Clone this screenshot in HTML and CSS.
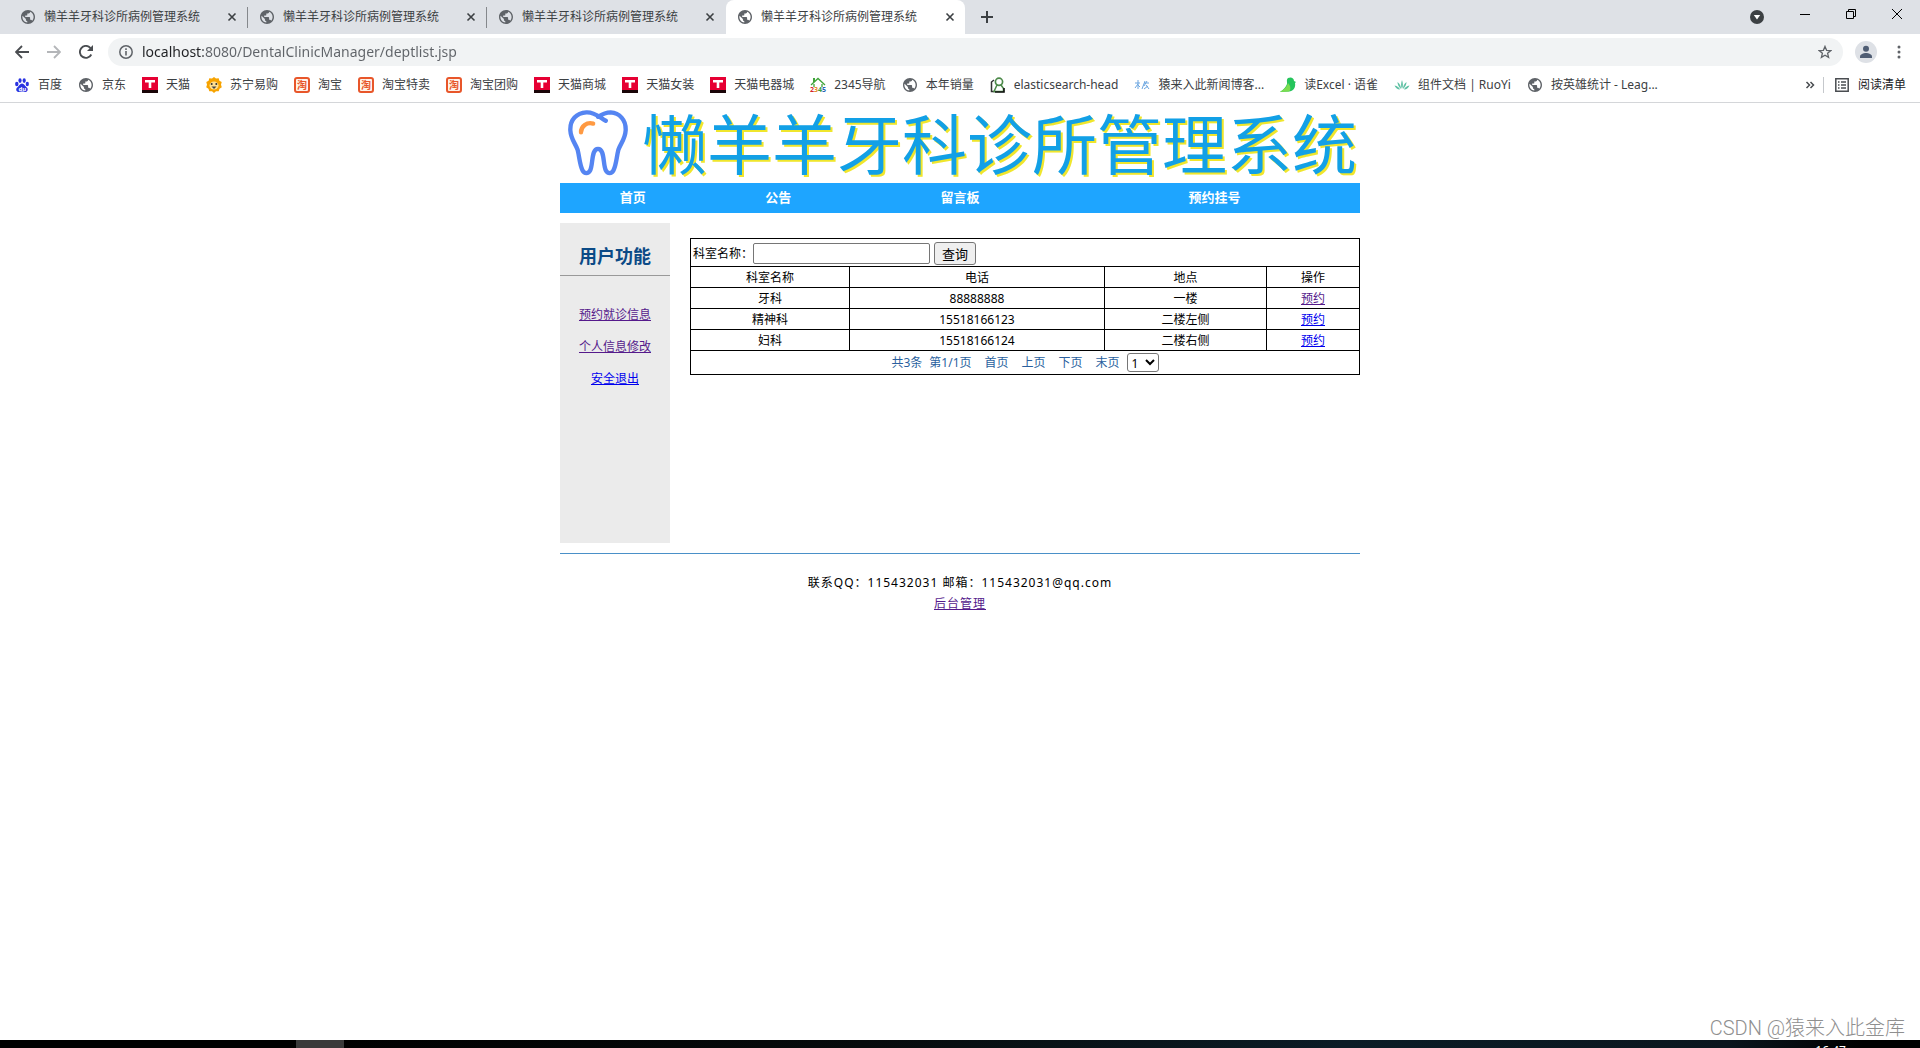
FILE: index.html
```html
<!DOCTYPE html>
<html lang="zh-CN">
<head>
<meta charset="utf-8">
<title>懒羊羊牙科诊所病例管理系统</title>
<link rel="stylesheet" href="styles.css">
</head>
<body>
<svg class="defs" aria-hidden="true">
  <symbol id="globe" viewBox="2 2 20 20"><path fill="#5f6368" d="M12 2C6.480 2 2 6.480 2 12s4.480 10 10 10 10-4.480 10-10S17.520 2 12 2zm-1 17.930c-3.950-.490-7-3.850-7-7.930 0-.620.080-1.210.210-1.790L9 15v1c0 1.100.9 2 2 2v1.930zm6.900-2.540c-.260-.810-1-1.390-1.900-1.390h-1v-3c0-.550-.450-1-1-1H8v-2h2c.550 0 1-.450 1-1V7h2c1.100 0 2-.9 2-2v-.410c2.930 1.190 5 4.060 5 7.410 0 2.080-.8 3.970-2.100 5.390z"/></symbol>
  <symbol id="close" viewBox="0 0 10 10"><path d="M1.500 1.500l7 7M8.500 1.500l-7 7" stroke="#3c4043" stroke-width="1.600" fill="none"/></symbol>
  <symbol id="tmall" viewBox="0 0 16 16"><path fill="#e60033" d="M0 0h16v13H0z"/><path fill="#1a0508" d="M0 13h16v3H0z"/><path fill="#fff" d="M3 3h10v2.500H9.300V11H6.700V5.500H3z"/></symbol>
</svg>

<header class="browser">
  <nav class="tabs" aria-label="标签页">
    <div class="tab"><svg class="i14"><use href="#globe"/></svg><span>懒羊羊牙科诊所病例管理系统</span><button aria-label="关闭"><svg class="i10"><use href="#close"/></svg></button></div>
    <div class="tab"><svg class="i14"><use href="#globe"/></svg><span>懒羊羊牙科诊所病例管理系统</span><button aria-label="关闭"><svg class="i10"><use href="#close"/></svg></button></div>
    <div class="tab last"><svg class="i14"><use href="#globe"/></svg><span>懒羊羊牙科诊所病例管理系统</span><button aria-label="关闭"><svg class="i10"><use href="#close"/></svg></button></div>
    <div class="tab active"><svg class="i14"><use href="#globe"/></svg><span>懒羊羊牙科诊所病例管理系统</span><button aria-label="关闭"><svg class="i10"><use href="#close"/></svg></button></div>
    <button class="new-tab" aria-label="新标签页"><svg class="i12" viewBox="0 0 12 12"><path d="M6 0v12M0 6h12" stroke="#3c4043" stroke-width="2"/></svg></button>
    <div class="window-buttons">
      <button aria-label="搜索标签页"><svg class="i14" viewBox="0 0 14 14"><circle cx="7" cy="7" r="7" fill="#3c4043"/><path fill="#fff" d="M3.800 5h6.400L7 9.500z"/></svg></button>
      <button class="raised" aria-label="最小化"><svg class="i10" viewBox="0 0 10 10"><path d="M0 5.500h10" stroke="#000"/></svg></button>
      <button class="raised" aria-label="还原"><svg class="i10" viewBox="0 0 10 10"><path d="M.5 2.500h7v7h-7zM2.500 2.500v-2h7v7h-2" fill="none" stroke="#000"/></svg></button>
      <button class="raised" aria-label="关闭窗口"><svg class="i10" viewBox="0 0 10 10"><path d="M0 0l10 10M10 0L0 10" stroke="#000"/></svg></button>
    </div>
  </nav>

  <div class="toolbar">
    <button aria-label="后退"><svg class="i14" viewBox="0 0 14 14"><path d="M14 7H1.500M7 1L1 7l6 6" fill="none" stroke="#4a4d51" stroke-width="1.800"/></svg></button>
    <button aria-label="前进"><svg class="i14" viewBox="0 0 14 14"><path d="M0 7h12.500M7 1l6 6-6 6" fill="none" stroke="#b4b6b9" stroke-width="1.800"/></svg></button>
    <button aria-label="刷新"><svg class="i14" viewBox="0 0 14 14"><path d="M12.300 9.500A6 6 0 1 1 11.300 2.800L12.500 4" fill="none" stroke="#4a4d51" stroke-width="1.900"/><path fill="#4a4d51" d="M14 0v6H8z"/></svg></button>
    <div class="omnibox">
      <svg class="i14" viewBox="0 0 14 14"><circle cx="7" cy="7" r="6.200" fill="none" stroke="#5f6368" stroke-width="1.500"/><path d="M6.200 6h1.600v4.500H6.200zM6.200 3.300h1.600v1.600H6.200z" fill="#5f6368"/></svg>
      <input type="text" aria-label="地址" value="localhost:8080/DentalClinicManager/deptlist.jsp">
      <button aria-label="收藏"><svg class="i14" viewBox="0 0 14 14"><path d="M7 1.400l1.600 3.900 4.200.3-3.200 2.700 1 4.100L7 10.200l-3.600 2.200 1-4.100L1.200 5.600l4.200-.3z" fill="none" stroke="#5f6368" stroke-width="1.300"/></svg></button>
    </div>
    <button class="avatar" aria-label="个人资料"><svg class="i22" viewBox="0 0 22 22"><circle cx="11" cy="11" r="11" fill="#dee1e6"/><circle cx="11" cy="7.800" r="3" fill="#4f5d73"/><path d="M5 17v-1.500c0-2 3.500-3.500 6-3.500s6 1.500 6 3.500V17z" fill="#4f5d73"/></svg></button>
    <button aria-label="菜单"><svg class="i14" viewBox="0 0 14 14" fill="#5f6368"><circle cx="7" cy="2" r="1.500"/><circle cx="7" cy="7" r="1.500"/><circle cx="7" cy="12" r="1.500"/></svg></button>
  </div>

  <nav class="bookmarks" aria-label="书签">
    <a href="#"><svg viewBox="0 0 16 16" fill="#2932e1"><ellipse cx="2.800" cy="7" rx="1.700" ry="2.200"/><ellipse cx="6" cy="3.600" rx="1.600" ry="2.300"/><ellipse cx="10.200" cy="3.600" rx="1.600" ry="2.300"/><ellipse cx="13.300" cy="7" rx="1.600" ry="2.200"/><path d="M8 6.600c2.200 0 3 2.400 4.800 3.900 1.700 1.500 1 4.300-1.300 4.400-1.300.1-2-.3-3.500-.3s-2.300.4-3.600.3c-2.300-.2-2.900-3-1.200-4.400C5 9 5.800 6.600 8 6.600z"/><text x="4.500" y="13.500" font-size="6" font-weight="700" fill="#fff">du</text></svg>百度</a>
    <a href="#"><svg class="small"><use href="#globe"/></svg>京东</a>
    <a href="#"><svg><use href="#tmall"/></svg>天猫</a>
    <a href="#"><svg viewBox="0 0 16 16"><path fill="#f7a300" d="M8 0l2 1.500 2.700-.2.700 2.500L15.700 5 15 7.700l.8 2.500-2.300 1.500-.8 2.600-2.700-.1L8 16l-2-1.800-2.700.1-.8-2.600L.2 10.200 1 7.700.3 5l2.300-1.200.7-2.500L6 1.500z"/><ellipse cx="8" cy="8.500" rx="4.500" ry="4" fill="#ffdf8f"/><circle cx="5.700" cy="7" r="1" fill="#333"/><circle cx="10.300" cy="7" r="1" fill="#333"/><path d="M5.500 9.500h5L8 12z" fill="#444"/></svg>苏宁易购</a>
    <a href="#"><span class="taobao">淘</span>淘宝</a>
    <a href="#"><span class="taobao">淘</span>淘宝特卖</a>
    <a href="#"><span class="taobao">淘</span>淘宝团购</a>
    <a href="#"><svg><use href="#tmall"/></svg>天猫商城</a>
    <a href="#"><svg><use href="#tmall"/></svg>天猫女装</a>
    <a href="#"><svg><use href="#tmall"/></svg>天猫电器城</a>
    <a href="#"><svg viewBox="0 0 16 16"><path d="M1 8l7-6.500L15 8M4 7v3M12 7v3" fill="none" stroke="#3fa43a" stroke-width="1.300"/><path d="M3 1h2v4H3z" fill="#3fa43a"/><g font-size="7" font-weight="700"><text x="0" y="15" fill="#d4262c">2</text><text x="4" y="15" fill="#e08a1c">3</text><text x="8" y="15" fill="#3b9c38">4</text><text x="12" y="15" fill="#2466b4">5</text></g></svg>2345导航</a>
    <a href="#"><svg class="small"><use href="#globe"/></svg>本年销量</a>
    <a href="#"><svg viewBox="0 0 16 16" fill="none"><path d="M4 3L1.500 5v9.500H5" stroke="#333" stroke-width="1.500"/><circle cx="9" cy="4.800" r="3.600" stroke="#4d8a4a" stroke-width="1.700"/><path d="M7 8l-3 6.500h9.500v-3L11 8" stroke="#4d8a4a" stroke-width="1.500"/><path d="M5 15h9v-4" stroke="#111" stroke-width="1.600"/></svg>elasticsearch-head</a>
    <a href="#"><svg viewBox="0 0 16 16" fill="none" stroke="#6aa5e0"><path d="M1 6h5M4 3v9M4 7l-3 4M4 8l2 2M8 12l3-8M10 6h5M13 4l-3 5M10 12l4-3M12 8l3 4"/></svg>猿来入此新闻博客...</a>
    <a href="#"><svg viewBox="0 0 16 16"><path d="M8 1c3-1.500 6 0 6 3l2 1-1 1c1 5-2 8-6 8.500L0 15C4 12 6 10 7 7c.5-2-1-4 1-6z" fill="#25c45c"/><path d="M0 15c4-3 7-5 8-9 3 3 3 7 1 8.500z" fill="#7ddc50"/></svg>读Excel · 语雀</a>
    <a href="#"><svg viewBox="0 0 16 16" fill="#5fc1a4"><path d="M8 12C6.500 9 7 6 8 3c1 3 1.500 6 0 9zM7 12C4.500 10 3.500 7 3.500 5 6 7 7 9 7 12zM9 12c2.500-2 3.500-5 3.500-7C10 7 9 9 9 12zM6 12.500C3 12.500 1.500 10.500.5 8.500c3 .5 4.500 2 5.500 4zM10 12.500c3 0 4.500-2 5.500-4-3 .5-4.500 2-5.500 4z"/></svg>组件文档 | RuoYi</a>
    <a href="#"><svg class="small"><use href="#globe"/></svg>按英雄统计 - Leag...</a>
    <button class="more" aria-label="更多书签"><svg class="i10" viewBox="0 0 10 10"><path d="M1.500 2l3 3-3 3M5.500 2l3 3-3 3" fill="none" stroke="#4a4d51" stroke-width="1.500"/></svg></button>
    <button class="reading"><svg class="i14" viewBox="0 0 14 14"><path d="M.8.8h12.400v12.400H.8z" fill="none" stroke="#4a4d51" stroke-width="1.500"/><path d="M3 4h1.500M6 4h5M3 7h1.500M6 7h5M3 10h1.500M6 10h5" stroke="#4a4d51" stroke-width="1.300"/></svg>阅读清单</button>
  </nav>
</header>

<main class="page">
  <div class="banner">
    <svg class="tooth" viewBox="0 0 62 68" fill="none" stroke-linecap="round"><path d="M39 11C33 8 28 2 19 2.500 9 3 2 10 2.500 21c.5 9 5 13 7.500 20 2 8 2 15 5 21 2 4 6 4 8 0 3-6 1-22 8-22s5 16 8 22c2 4 6 4 8 0 3-6 3-13 5-21 2.500-7 7-11 7.500-20C60 10 53 3 44 2.500c-5 0-9 2-13 4.500" stroke="#5585f2" stroke-width="4.500"/><path d="M13.500 23c0-6 6-11 12.500-9" stroke="#ff9a42" stroke-width="4.500"/></svg>
    <h1>懒羊羊牙科诊所管理系统</h1>
  </div>
  <nav class="menu" aria-label="主导航">
    <a class="two" href="#">首页</a><a class="two" href="#">公告</a><a class="three" href="#">留言板</a><a class="four" href="#">预约挂号</a>
  </nav>
  <div class="columns">
    <aside>
      <h2>用户功能</h2>
      <a class="visited" href="#">预约就诊信息</a>
      <a class="visited" href="#">个人信息修改</a>
      <a href="#">安全退出</a>
    </aside>
    <section>
      <table>
        <colgroup><col class="c-name"><col class="c-phone"><col class="c-place"><col class="c-action"></colgroup>
        <tr class="search"><td colspan="4"><form><label for="dept">科室名称：</label><input id="dept" type="text"><button type="button">查询</button></form></td></tr>
        <tr><td>科室名称</td><td>电话</td><td>地点</td><td>操作</td></tr>
        <tr><td>牙科</td><td>88888888</td><td>一楼</td><td><a class="visited" href="#">预约</a></td></tr>
        <tr><td>精神科</td><td>15518166123</td><td>二楼左侧</td><td><a href="#">预约</a></td></tr>
        <tr><td>妇科</td><td>15518166124</td><td>二楼右侧</td><td><a href="#">预约</a></td></tr>
        <tr class="pager"><td colspan="4"><div><span>共3条</span><span>第1/1页</span><a href="#">首页</a><a href="#">上页</a><a href="#">下页</a><a href="#">末页</a><select aria-label="页码"><option>1</option></select></div></td></tr>
      </table>
    </section>
  </div>
  <footer>
    <p>联系QQ：115432031 邮箱：115432031@qq.com</p>
    <p><a class="visited" href="#">后台管理</a></p>
  </footer>
</main>

<div class="taskbar"><span class="task"></span><time>16:47</time></div>
<div class="watermark">CSDN @猿来入此金库</div>
</body>
</html>
```

FILE: styles.css
```css
* { box-sizing: border-box; }
body {
  margin: 0;
  min-height: 100vh;
  display: flex;
  flex-direction: column;
  position: relative;
  background: #fff;
  color: #000;
  font: 12px/16px "Noto Sans", "Noto Sans CJK SC", sans-serif;
}
h1, h2, p { margin: 0; font-weight: 400; }
button { font: inherit; color: inherit; }
.defs { position: absolute; width: 0; height: 0; }
svg { display: block; flex: none; }
.i10 { width: 10px; height: 10px; }
.i12 { width: 12px; height: 12px; }
.i14 { width: 14px; height: 14px; }
.i22 { width: 22px; height: 22px; }

/* browser window */
.browser { color: #3c4043; border-bottom: 1px solid #d4d6d9; }
.browser button { display: flex; align-items: center; border: 0; padding: 0; background: none; }
.tabs { display: flex; height: 34px; padding-left: 9px; background: #dee1e6; }
.tab { flex: 0 1 239px; display: flex; align-items: center; gap: 9px; padding: 0 10px 0 12px; border-right: 1px solid #85888c; border-image: linear-gradient(transparent 8px, #85888c 8px, #85888c 27px, transparent 27px) 1; }
.tab span { flex: 1; white-space: nowrap; overflow: hidden; }
.tab.last { border-color: transparent; border-image: none; }
.tab.active { background: #fff; border: 0; border-radius: 8px 8px 0 0; }
.new-tab { margin-left: 16px; }
.window-buttons { display: flex; align-items: center; margin-left: auto; gap: 36px; padding-right: 18px; }
.window-buttons .raised { margin-bottom: 6px; }
.toolbar { display: flex; align-items: center; gap: 18px; height: 36px; padding: 0 14px 0 15px; }
.omnibox { flex: 1; display: flex; align-items: center; gap: 9px; height: 28px; margin: 0 -6px 0 -3px; padding: 0 11px; border-radius: 14px; background: #f1f3f4; }
.omnibox input { flex: 1; border: 0; padding: 0; outline: 0; font: 14px/20px "Noto Sans", sans-serif; color: transparent; background: linear-gradient(90deg, #202124 61px, #5f6368 61px); -webkit-background-clip: text; background-clip: text; }
.toolbar .avatar { margin-right: -3px; }
.bookmarks { display: flex; align-items: center; gap: 16px; height: 32px; padding: 0 14px 2px; white-space: nowrap; }
.bookmarks a { display: flex; align-items: center; gap: 8px; color: #3c4043; text-decoration: none; }
.bookmarks a svg { width: 16px; height: 16px; overflow: visible; }
.bookmarks a .small { padding: 1px; }
.taobao { width: 16px; height: 16px; border: 2px solid #e8562a; border-radius: 3px; background: #fff3ea; color: #e8562a; font: bold 10px/12px "Noto Sans CJK SC", sans-serif; text-align: center; }
.bookmarks .more { margin-left: auto; }
.bookmarks .reading { gap: 9px; height: 16px; margin-left: -8px; padding-left: 11px; border-left: 1px solid #c5c8cc; color: #202124; }

/* clinic site */
.page { width: 100%; max-width: 800px; margin: 0 auto; flex: 1; }
.page a { color: #00e; }
.page a.visited { color: #551a8b; }
.banner { display: flex; align-items: center; height: 80px; padding: 0 4px 0 7px; gap: 13px; }
.tooth { width: 62px; height: 66px; }
h1 { font: 65px/76px "Noto Sans CJK SC", sans-serif; padding-bottom: 4px; color: #12a0e6; text-shadow: 2px 2px 0 #f0e62c; white-space: nowrap; }
.menu { display: flex; height: 30px; background: #1ea5ff; font: bold 13px/28px "Noto Sans CJK SC", sans-serif; text-align: center; }
.menu a { color: #fff; text-decoration: none; flex: 2 1 0; }
.menu .three { flex-grow: 3; }
.menu .four { flex-grow: 4; }
.columns { display: flex; gap: 20px; padding: 10px 0; border-bottom: 1px solid #4a90c8; }
aside { width: 110px; min-height: 320px; background: #ebebeb; text-align: center; }
aside h2 { height: 53px; margin-bottom: 23px; padding-top: 12px; border-bottom: 1px solid #999; font: bold 18px/40px "Noto Sans CJK SC", sans-serif; color: #0b4a86; }
aside a { display: block; line-height: 32px; }
section { flex: 1; padding-top: 15px; }
table { width: 100%; border-collapse: collapse; table-layout: fixed; text-align: center; }
.c-name { width: 159px; }
.c-phone { width: 255px; }
.c-place { width: 162px; }
td { height: 21px; padding: 2px 2px 0; border: 1px solid #000; line-height: 18px; }
.search td { height: 28px; }
form { display: flex; align-items: center; }
form input { width: 177px; height: 21px; margin-right: 4px; border: 1px solid #767676; border-radius: 2px; }
form button { width: 42px; height: 23px; padding: 0; border: 1px solid #767676; border-radius: 3px; background: #efefef; color: #000; font-size: 13px; line-height: 18px; }
.pager td { height: 24px; padding-top: 0; }
.pager div { display: flex; align-items: center; justify-content: center; gap: 13px; color: #2a5f9e; }
.pager a { color: #2a5f9e; text-decoration: none; }
.pager span:first-child { margin-right: -6px; }
.pager select { width: 32px; height: 19px; margin-left: -6px; padding: 0; border: 1px solid #767676; border-radius: 3px; background: #fff; color: #000; font: 12px "Noto Sans", sans-serif; }
footer { padding-top: 18px; text-align: center; line-height: 21px; letter-spacing: 1px; }

/* bottom edge of the desktop */
.taskbar { display: flex; height: 8px; overflow: hidden; padding: 0 74px 0 296px; justify-content: space-between; background: linear-gradient(90deg, #000 16%, #060b0c 45%, #0b1c26 70%, #0a161e 90%, #000 97%); }
.task { width: 48px; background: #3a3a3a; }
.taskbar time { padding-top: 3px; line-height: 16px; color: #fff; }
.watermark { position: absolute; right: 15px; bottom: 8px; font: 300 20px/24px Roboto, "Noto Sans CJK SC", sans-serif; color: #8f8f8f; text-shadow: -1px -1px 0 #fff; }
```
